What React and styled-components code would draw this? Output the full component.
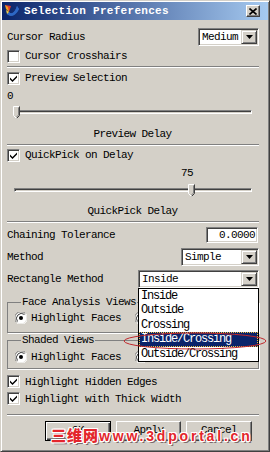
import React from 'react';
import styled, { createGlobalStyle } from 'styled-components';

const Global = createGlobalStyle`
  html, body { margin: 0; padding: 0; background: #d4d0c8; }
  body { font-family: "Liberation Mono", monospace; }
`;

const Window = styled.div`
  position: relative;
  width: 270px;
  height: 452px;
  box-sizing: border-box;
  background: #d4d0c8;
  border: 1px solid;
  border-color: #d4d0c8 #404040 #404040 #d4d0c8;
  box-shadow: inset 1px 1px 0 #fff, inset -1px -1px 0 #808080;
  padding: 1px;
  display: flex;
  flex-direction: column;
  font-family: "Liberation Mono", monospace;
  font-size: 11px;
  letter-spacing: -0.6px;
  color: #000;
  overflow: hidden;
`;

const TitleBar = styled.div`
  height: 18px;
  flex: none;
  display: flex;
  align-items: center;
  padding: 0 8px 0 2px;
  background: linear-gradient(to right, #0a246a, #a6caf0);
  color: #fff;
  font-weight: bold;
  letter-spacing: 0.3px;
`;

const TitleText = styled.span`
  flex: 1;
  margin-left: 4px;
`;

const CloseBtn = styled.span`
  width: 14px;
  height: 12px;
  box-sizing: border-box;
  background: #d4d0c8;
  border: 1px solid;
  border-color: #fff #404040 #404040 #fff;
  box-shadow: inset -1px -1px 0 #808080;
  display: flex;
  align-items: center;
  justify-content: center;
`;

const Content = styled.div`
  flex: 1;
  display: flex;
  flex-direction: column;
  padding: 0 10px 0 5px;
`;

const Row = styled.div`
  display: flex;
  align-items: center;
  justify-content: space-between;
  height: ${p => p.$h || 18}px;
  margin-top: ${p => p.$mt || 0}px;
  flex: none;
  position: relative;
  z-index: ${p => p.$z || 'auto'};
`;

const Label = styled.span`
  white-space: nowrap;
`;

const CheckRowWrap = styled.label`
  display: flex;
  align-items: center;
  gap: 5px;
  height: ${p => p.$h || 18}px;
  margin-top: ${p => p.$mt || 0}px;
  flex: none;
  white-space: nowrap;
`;

const Box = styled.span`
  width: 13px;
  height: 13px;
  box-sizing: border-box;
  background: #fff;
  border: 1px solid;
  border-color: #808080 #fff #fff #808080;
  box-shadow: inset 1px 1px 0 #404040, inset -1px -1px 0 #d4d0c8;
  display: inline-flex;
  align-items: center;
  justify-content: center;
  flex: none;
`;

const Separator = styled.div`
  height: 0;
  border-top: 1px solid #808080;
  border-bottom: 1px solid #fff;
  margin-top: ${p => p.$mt || 0}px;
  margin-right: -1px;
  flex: none;
`;

const Caption = styled.div`
  height: 16px;
  line-height: 16px;
  text-align: center;
  margin-top: ${p => p.$mt || 0}px;
  flex: none;
`;

const ValueRow = styled.div`
  height: 14px;
  line-height: 14px;
  margin-top: ${p => p.$mt || 0}px;
  flex: none;
  position: relative;
`;

const SliderWrap = styled.div`
  position: relative;
  height: 16px;
  margin-top: ${p => p.$mt || 0}px;
  flex: none;
`;

const Track = styled.div`
  position: absolute;
  left: ${p => p.$left}px;
  right: 6px;
  top: 6px;
  height: 4px;
  box-sizing: border-box;
  border: 1px solid;
  border-color: #808080 #fff #fff #808080;
  box-shadow: inset 1px 1px 0 #404040, inset -1px -1px 0 #d4d0c8;
`;

const Thumb = styled.svg`
  position: absolute;
  top: 2px;
`;

const SelectBox = styled.div`
  position: relative;
  width: ${p => p.$w}px;
  height: 18px;
  box-sizing: border-box;
  background: #fff;
  border: 1px solid;
  border-color: #808080 #fff #fff #808080;
  box-shadow: inset 1px 1px 0 #404040, inset -1px -1px 0 #d4d0c8;
  display: flex;
  align-items: center;
  padding: 1px 1px 1px 3px;
  margin-right: -1px;
`;

const SelectText = styled.span`
  flex: 1;
  white-space: nowrap;
`;

const ArrowBtn = styled.span`
  width: 16px;
  height: 14px;
  box-sizing: border-box;
  background: #d4d0c8;
  border: 1px solid;
  border-color: #d4d0c8 #404040 #404040 #d4d0c8;
  box-shadow: inset 1px 1px 0 #fff, inset -1px -1px 0 #808080;
  display: flex;
  align-items: center;
  justify-content: center;
`;

const DropList = styled.div`
  position: absolute;
  left: -1px;
  right: -1px;
  top: 100%;
  margin-top: 1px;
  background: #fff;
  border: 1px solid #000;
  z-index: 5;
`;

const DropItem = styled.div`
  height: 14.4px;
  line-height: 14.4px;
  padding-left: 2px;
  font-size: 12px;
  letter-spacing: -1.2px;
  white-space: nowrap;
  background: ${p => (p.$sel ? '#0a246a' : '#fff')};
  color: ${p => (p.$sel ? '#fff' : '#000')};
  outline: ${p => (p.$sel ? '1px dotted #f0c040' : 'none')};
  outline-offset: -1px;
`;

const TextInput = styled.div`
  width: 52px;
  height: 16px;
  box-sizing: border-box;
  background: #fff;
  border: 1px solid;
  border-color: #808080 #fff #fff #808080;
  box-shadow: inset 1px 1px 0 #404040, inset -1px -1px 0 #d4d0c8;
  text-align: right;
  line-height: 14px;
  padding-right: 2px;
`;

const Group = styled.fieldset`
  margin: ${p => p.$mt || 0}px 0 0 0;
  padding: 0 0 ${p => p.$pb || 0}px 7px;
  border: 1px solid #808080;
  box-shadow: 1px 1px 0 #fff;
  min-inline-size: 0;
  flex: none;
  margin-right: -1px;
`;

const Legend = styled.legend`
  padding: 0 1px;
  margin-left: 6px;
  height: 12px;
  line-height: 12px;
`;

const RadioRow = styled.div`
  display: flex;
  align-items: center;
  height: 16px;
  margin-top: ${p => p.$mt || 0}px;
`;

const RadioItem = styled.span`
  display: flex;
  align-items: center;
  gap: 4px;
  width: ${p => p.$w}px;
  white-space: nowrap;
`;

const ButtonRow = styled.div`
  display: flex;
  justify-content: flex-end;
  gap: 5px;
  margin-top: ${p => p.$mt || 0}px;
  padding-right: 6px;
  flex: none;
`;

const Button = styled.div`
  width: ${p => p.$w || 65}px;
  height: 20px;
  box-sizing: border-box;
  background: #d4d0c8;
  border: 1px solid;
  border-color: ${p => (p.$default ? '#000' : '#fff #404040 #404040 #fff')};
  box-shadow: ${p =>
    p.$default
      ? 'inset 1px 1px 0 #fff, inset -1px -1px 0 #404040, inset -2px -2px 0 #808080'
      : 'inset -1px -1px 0 #808080'};
  display: flex;
  align-items: center;
  justify-content: center;
  padding-bottom: 2px;
`;

const Watermark = styled.div`
  position: absolute;
  left: 50px;
  top: 425px;
  white-space: nowrap;
  color: #e3262c;
  font-weight: 900;
  line-height: 18px;
  letter-spacing: 0;
  text-shadow: -1px -1px 0 #fff, 1px -1px 0 #fff, -1px 1px 0 #fff, 1px 1px 0 #fff,
    0 -1px 0 #fff, 0 1px 0 #fff, -1px 0 0 #fff, 1px 0 0 #fff, 2px 2px 0 #7a6a6a;
  z-index: 10;
`;

const WmCjk = styled.span`
  font-family: "Noto Sans CJK SC", sans-serif;
  font-size: 15px;
  letter-spacing: 1px;
`;

const WmLatin = styled.span`
  font-family: "Liberation Sans", sans-serif;
  font-size: 14px;
  letter-spacing: 2.8px;
`;

const Annotation = styled.svg`
  position: absolute;
  left: 121px;
  top: 330px;
  z-index: 8;
  pointer-events: none;
`;

const Check = () => (
  <svg width="7" height="7" viewBox="0 0 7 7">
    <path d="M0 2.5 L2.5 5 L7 0.5 L7 2.5 L2.5 7 L0 4.5 Z" fill="#000" />
  </svg>
);

const CheckRow = ({ checked, children, mt, h }) => (
  <CheckRowWrap $mt={mt} $h={h}>
    <Box>{checked && <Check />}</Box>
    <Label>{children}</Label>
  </CheckRowWrap>
);

const Radio = ({ checked }) => (
  <svg width="12" height="12" viewBox="0 0 12 12" style={{ flex: 'none' }}>
    <circle cx="6" cy="6" r="5.5" fill="#fff" />
    <path d="M1.5 10.5 A6 6 0 0 1 10.5 1.5" stroke="#808080" strokeWidth="1" fill="none" />
    <path d="M2.5 9.5 A5 5 0 0 1 9.5 2.5" stroke="#404040" strokeWidth="1" fill="none" />
    <path d="M10.5 1.5 A6 6 0 0 1 1.5 10.5" stroke="#fff" strokeWidth="1" fill="none" />
    {checked && <circle cx="6" cy="6" r="2" fill="#000" />}
  </svg>
);

const Arrow = () => (
  <svg width="7" height="4" viewBox="0 0 7 4">
    <path d="M0 0 H7 L3.5 4 Z" fill="#000" />
  </svg>
);

const Select = ({ value, w, items, selected }) => (
  <SelectBox $w={w}>
    <SelectText>{value}</SelectText>
    <ArrowBtn>
      <Arrow />
    </ArrowBtn>
    {items && (
      <DropList>
        {items.map(it => (
          <DropItem key={it} $sel={it === selected}>
            {it}
          </DropItem>
        ))}
      </DropList>
    )}
  </SelectBox>
);

const Slider = ({ value, mt }) => {
  const left = 6 + value * 2.333;
  return (
    <SliderWrap $mt={mt}>
      <Track $left={7} />
      <Thumb width="7" height="13" viewBox="0 0 7 13" style={{ left }}>
        <path d="M0.5 0.5 H6.5 V9.5 L3.5 12.5 L0.5 9.5 Z" fill="#d4d0c8" />
        <path d="M0.5 9.5 V0.5 H6" stroke="#fff" fill="none" />
        <path d="M6.5 0.5 V9.5 L3.5 12.5" stroke="#404040" fill="none" />
        <path d="M5.5 1.5 V9 L3.5 11" stroke="#808080" fill="none" />
        <path d="M0.5 9.5 L3.5 12.5" stroke="#fff" fill="none" />
      </Thumb>
    </SliderWrap>
  );
};

const ValueLabel = ({ value, mt }) => (
  <ValueRow $mt={mt}>
    <span style={{ paddingLeft: Math.max(0, Math.round(value * 2.333 - 1)) }}>{value}</span>
  </ValueRow>
);

const AppIcon = () => (
  <svg width="16" height="16" viewBox="0 0 16 16">
    <path d="M1 2 L7 3 L5 9 Z" fill="#e23a2e" />
    <path d="M1 2 L4 4 L5 9 L2 6 Z" fill="#f0a020" />
    <path d="M3 11 C6 14 11 14 15 6 L13 3 C11 9 8 12 5 9 Z" fill="#3a7fd8" />
    <path d="M5 9 C8 12 11 9 13 3 L15 6 C12 13 7 14 3 11 Z" fill="#2457b8" opacity="0.6" />
    <path d="M2 7 L5 9 L3 11 Z" fill="#f4d34a" />
  </svg>
);

export default function App() {
  const rectItems = ['Inside', 'Outside', 'Crossing', 'Inside/Crossing', 'Outside/Crossing'];
  return (
    <>
      <Global />
      <Window>
        <TitleBar>
          <AppIcon />
          <TitleText>Selection Preferences</TitleText>
          <CloseBtn>
            <svg width="8" height="7" viewBox="0 0 8 7">
              <path d="M0.5 0.5 L7.5 6.5 M7.5 0.5 L0.5 6.5" stroke="#000" strokeWidth="1.6" />
            </svg>
          </CloseBtn>
        </TitleBar>
        <Content>
          <Row $mt={8}>
            <Label>Cursor Radius</Label>
            <Select value="Medium" w={61} />
          </Row>
          <CheckRow mt={1}>Cursor Crosshairs</CheckRow>
          <Separator $mt={1} />
          <CheckRow checked mt={1}>Preview Selection</CheckRow>
          <ValueLabel value={0} mt={2} />
          <Slider value={0} mt={1} />
          <Caption $mt={6}>Preview Delay</Caption>
          <Separator $mt={2} />
          <CheckRow checked>QuickPick on Delay</CheckRow>
          <ValueLabel value={75} mt={2} />
          <Slider value={75} mt={2} />
          <Caption $mt={5}>QuickPick Delay</Caption>
          <Separator $mt={2} />
          <Row $mt={3}>
            <Label>Chaining Tolerance</Label>
            <TextInput>0.0000</TextInput>
          </Row>
          <Row $mt={4}>
            <Label>Method</Label>
            <Select value="Simple" w={78} />
          </Row>
          <Row $mt={4} $z={5}>
            <Label>Rectangle Method</Label>
            <Select value="Inside" w={121} items={rectItems} selected="Inside/Crossing" />
          </Row>
          <Group $mt={8} $pb={6}>
            <Legend>Face Analysis Views</Legend>
            <RadioRow $mt={2}>
              <RadioItem $w={120}>
                <Radio checked />
                Highlight Faces
              </RadioItem>
              <RadioItem $w={110}>
                <Radio />
                Highlight Edges
              </RadioItem>
            </RadioRow>
          </Group>
          <Group $mt={1} $pb={3}>
            <Legend>Shaded Views</Legend>
            <RadioRow $mt={3}>
              <RadioItem $w={120}>
                <Radio checked />
                Highlight Faces
              </RadioItem>
              <RadioItem $w={110}>
                <Radio />
                Highlight Edges
              </RadioItem>
            </RadioRow>
          </Group>
          <CheckRow checked mt={4} h={17}>Highlight Hidden Edges</CheckRow>
          <CheckRow checked h={17}>Highlight with Thick Width</CheckRow>
          <Separator $mt={7} />
          <ButtonRow $mt={5}>
            <Button $default $w={66}>OK</Button>
            <Button $w={65}>Apply</Button>
            <Button $w={66}>Cancel</Button>
          </ButtonRow>
        </Content>
        <Annotation width="146" height="20" viewBox="0 0 146 20">
          <ellipse cx="73" cy="10" rx="71" ry="8" fill="none" stroke="#c0282c" strokeWidth="1" />
        </Annotation>
        <Watermark>
          <WmCjk>三维网</WmCjk>
          <WmLatin>www.3dportal.cn</WmLatin>
        </Watermark>
      </Window>
    </>
  );
}
